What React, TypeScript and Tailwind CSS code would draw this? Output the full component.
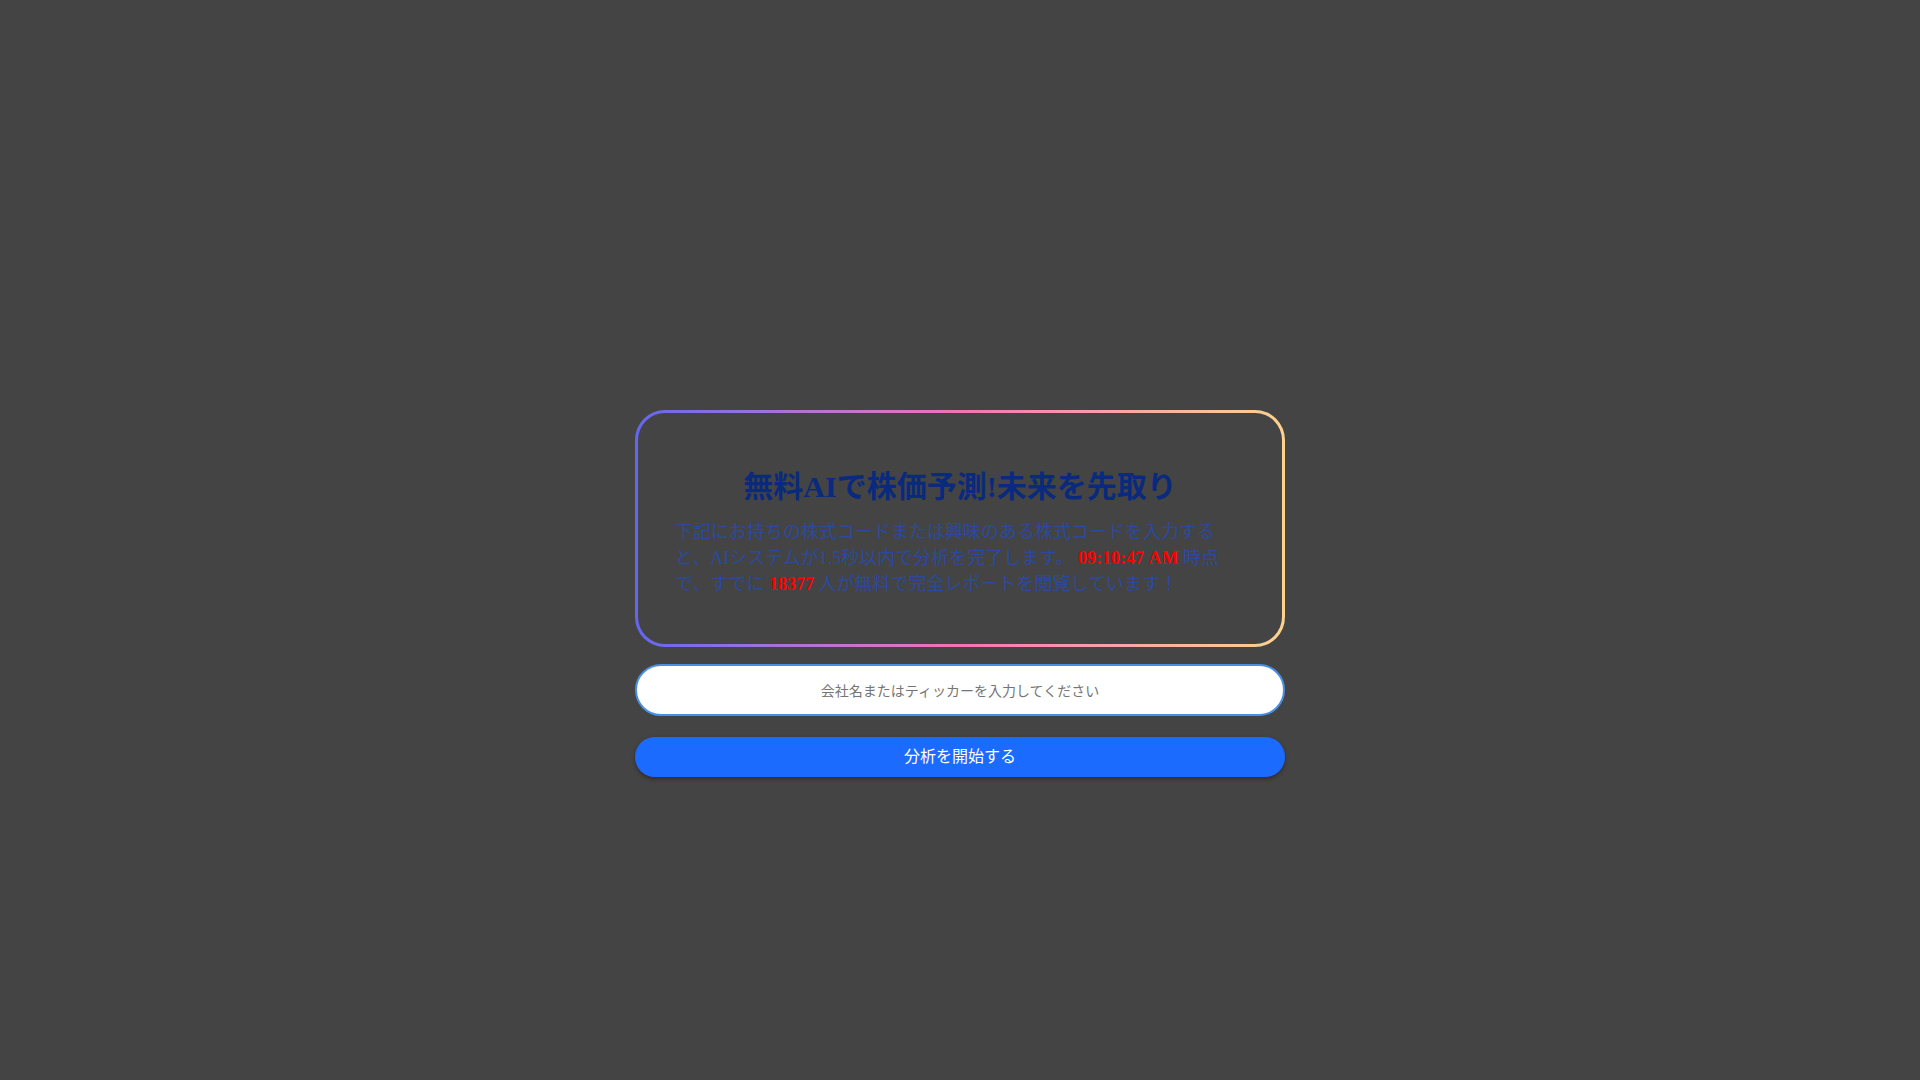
import { useState } from 'react';

export default function App() {
  const [query, setQuery] = useState('');

  return (
    <div className="min-h-screen w-full bg-[#444444] pt-[410px]">
      <div className="mx-auto flex w-[650px] flex-col">
        {/* Gradient-bordered hero card */}
        <div className="rounded-[30px] bg-gradient-to-r from-[#6366f1] via-[#f472b6] to-[#fbd38d] p-[3px]">
          <div className="flex flex-col items-center rounded-[27px] bg-[#444444] px-[37px] pt-[56px] pb-[47px] font-['Liberation_Serif','Noto_Sans_CJK_JP',serif]">
            <h1 className="text-[30px] font-bold leading-[36px] text-[#0a2a7d]">
              無料AIで株価予測!未来を先取り
            </h1>
            <p className="mt-[14px] w-[552px] self-start text-left text-[18px] leading-[26px] text-[#2b4a9e]">
              下記にお持ちの株式コードまたは興味のある株式コードを入力すると、AIシステムが1.5秒以内で分析を完了します。{' '}
              <span className="font-bold text-[#ff0000]">09:10:47 AM</span> 時点で、すでに{' '}
              <span className="font-bold text-[#ff0000]">18377</span> 人が無料で完全レポートを閲覧しています！
            </p>
          </div>
        </div>

        {/* Search input */}
        <input
          type="text"
          value={query}
          onChange={(e) => setQuery(e.target.value)}
          placeholder="会社名またはティッカーを入力してください"
          className="mt-[17px] h-[52px] w-full rounded-full border-2 border-[#4a90e2] bg-white px-6 text-center font-['Noto_Sans_CJK_JP','Noto_Sans',sans-serif] text-[14px] text-[#333] outline-none placeholder:text-[#757575]"
        />

        {/* Submit */}
        <button className="mt-[21px] h-[40px] w-full rounded-full bg-[#1c6bff] pb-[5px] font-['Noto_Sans_CJK_JP','Noto_Sans',sans-serif] text-[16px] text-white shadow-[0_2px_4px_rgba(0,0,0,0.35)]">
          分析を開始する
        </button>
      </div>
    </div>
  );
}
